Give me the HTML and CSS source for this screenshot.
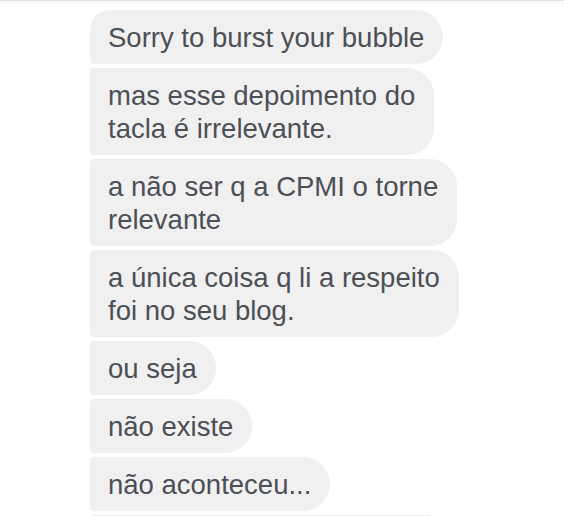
FILE: index.html
```html
<!DOCTYPE html>
<html lang="pt-BR">
<head>
  <meta charset="UTF-8">
  <meta name="viewport" content="width=device-width, initial-scale=1.0">
  <title>Conversa</title>
  <link rel="stylesheet" href="styles.css">
</head>
<body>
  <div class="topbar"></div>

  <section class="thread">
    <div class="bubble first">Sorry to burst your bubble</div>
    <div class="bubble">mas esse depoimento do<br>tacla é irrelevante.</div>
    <div class="bubble">a não ser q a CPMI o torne<br>relevante</div>
    <div class="bubble">a única coisa q li a respeito<br>foi no seu blog.</div>
    <div class="bubble">ou seja</div>
    <div class="bubble">não existe</div>
    <div class="bubble">não aconteceu...</div>
    <!-- next message, cut off by the window -->
    <div class="bubble partial"></div>
  </section>
</body>
</html>
```

FILE: styles.css
```css
/* Reset Styles */
* {
  margin: 0;
  padding: 0;
  box-sizing: border-box;
}

body {
  font-family: 'Liberation Sans', Arial, sans-serif;
  background-color: #ffffff;
  color: #4b4f56;
  height: 516px;
  overflow: hidden;
}

.topbar {
  height: 1px;
  background-color: #e4e4e4;
  box-shadow: 0 1px 3px rgba(0, 0, 0, 0.12);
}

.thread {
  display: flex;
  flex-direction: column;
  align-items: flex-start;
  gap: 4px;
  padding: 9px 0 0 90px;
}

.bubble {
  background-color: #f1f0f0;
  font-size: 27.5px;
  line-height: 33px;
  padding: 10.5px 19px 10.5px 18px;
  border-radius: 4px 27px 27px 4px;
  white-space: nowrap;
}

.bubble.first {
  border-top-left-radius: 20px;
}

.bubble.partial {
  width: 363px;
  height: 54px;
}
```
